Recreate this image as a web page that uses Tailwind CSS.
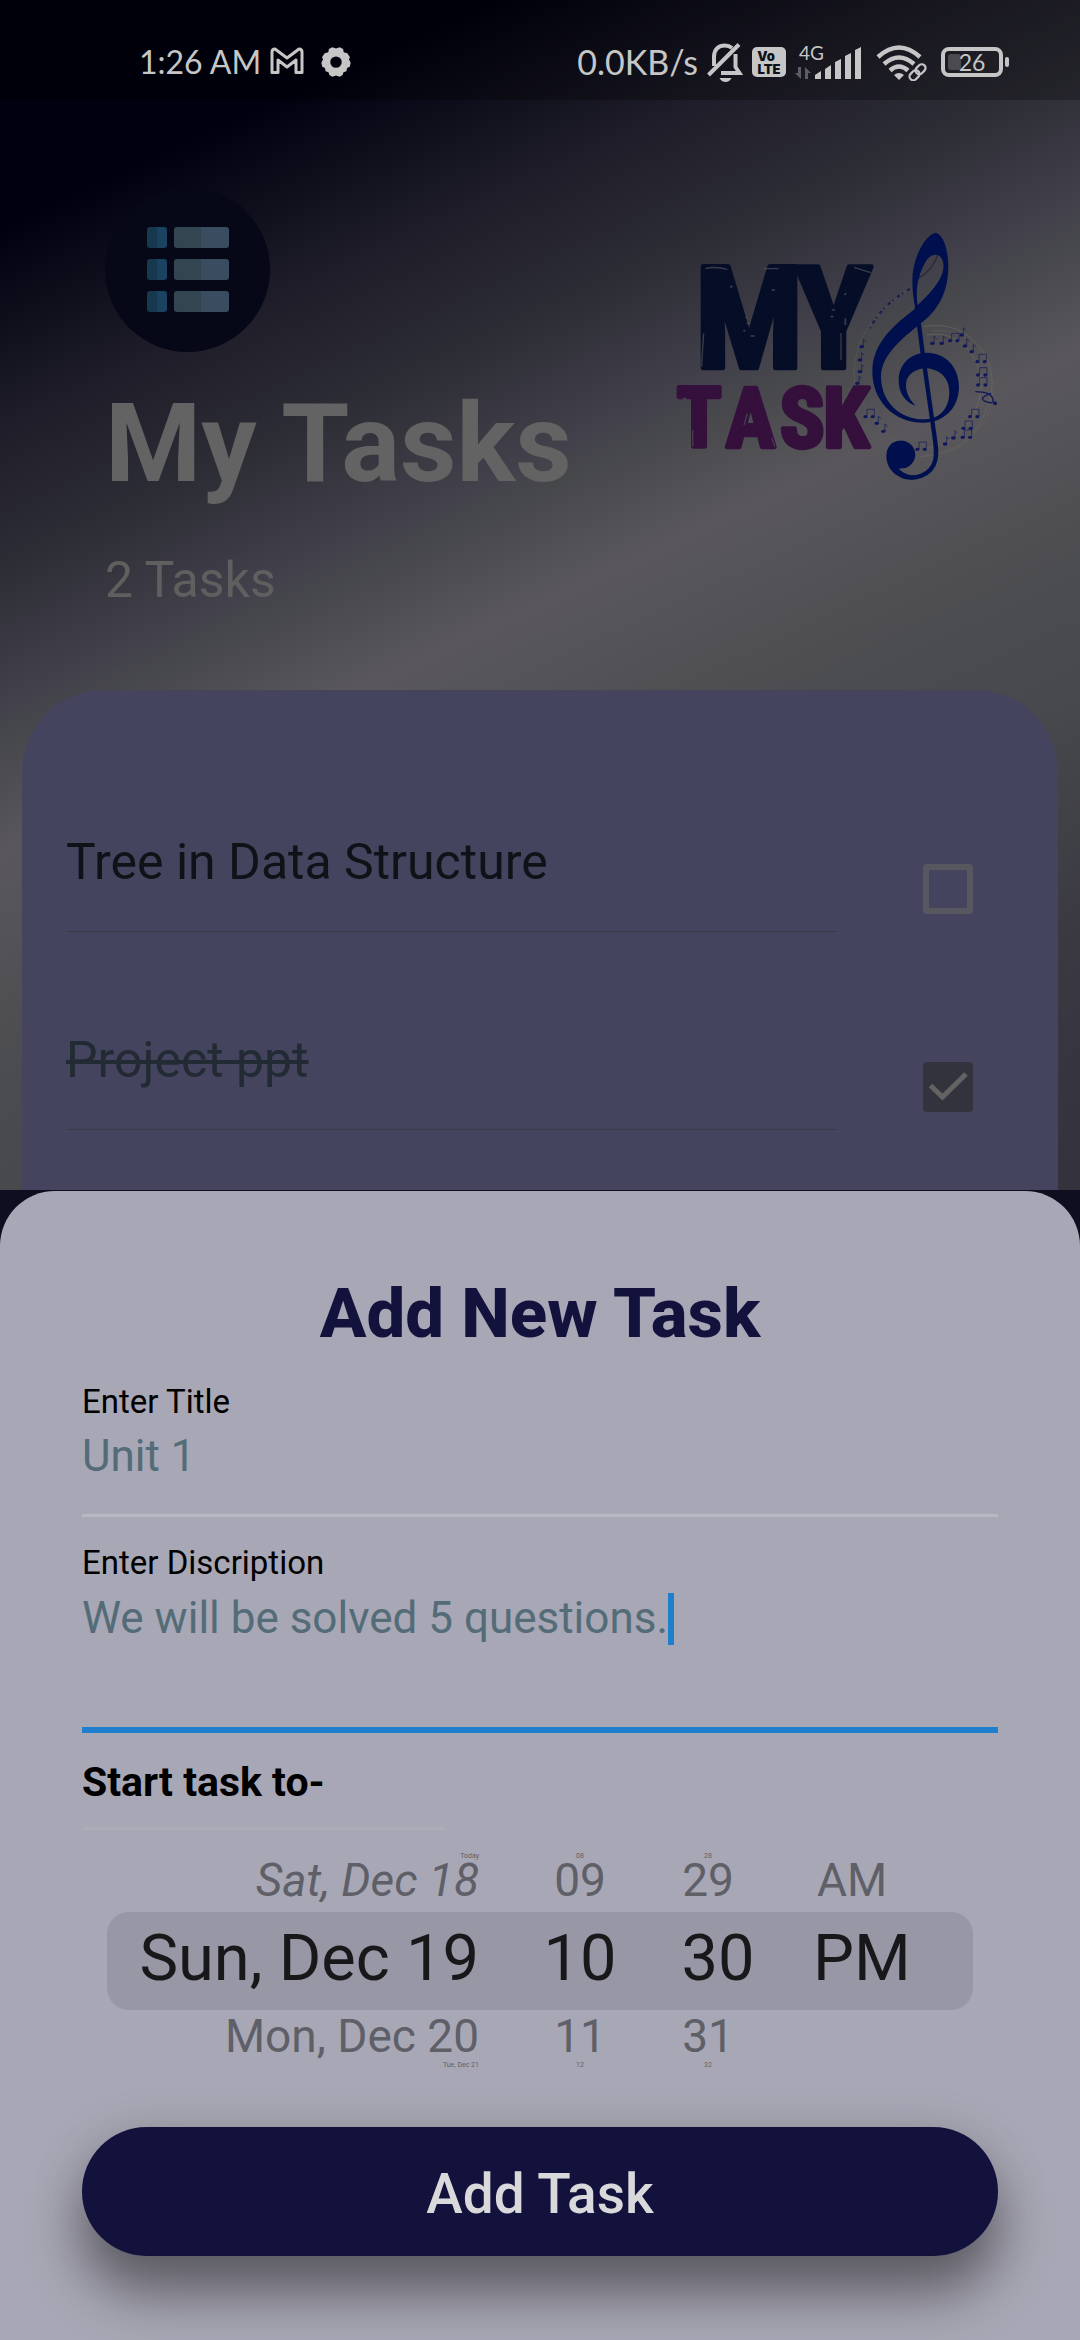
<!DOCTYPE html>
<html lang="en">
<head>
<meta charset="utf-8">
<meta name="viewport" content="width=device-width, initial-scale=1">
<title>My Tasks</title>
<script src="https://cdn.jsdelivr.net/npm/@tailwindcss/browser@4"></script>
</head>
<body class="bg-[#0e0e20] font-['Roboto',sans-serif]">
<div class="flex min-h-screen flex-col bg-[linear-gradient(155deg,#00000f_0%,#00000f_8%,#1e1d29_15%,#2d2d36_20%,#43424c_25%,#46474b_26%,#59575c_30%,#4b4c4f_38%,#47494c_42%,#3b3a43_50%,#33323d_59%,#1b1a28_80%)]">

  <!-- Status bar -->
  <div class="flex h-[100px] items-center bg-black/25 pt-6 pr-[71px] pl-[139px] font-['Lato',sans-serif] text-[34px] leading-10 text-[#c6c6c6]">
    <span class="text-[32px]">1:26 AM</span>
    <svg class="ml-[9px] h-[30px] w-[34px]" viewBox="0 0 34 30" fill="none" stroke="currentColor" stroke-width="3" stroke-linejoin="round" aria-label="Gmail"><path d="M2 25.500V5q0-3 3-3L17 11 29 2q3 0 3 3v20.500h-6V13l-9 7-9-7v12.500z"/></svg>
    <svg class="ml-[16px] h-[32px] w-[32px]" viewBox="0 0 24 24" fill="currentColor" aria-label="Settings"><path fill-rule="evenodd" d="M9.200 1 12 1.800 14.800 1 17.300 2.300 17.800 4.700 20.500 5.500 22.500 8.500 21.700 10 23 12.500 22.300 15.500 20.300 16.500 19.800 19 17.600 19.600 17 21.700 14.800 23 12 22.200 9.200 23 7 21.700 6.400 19.600 4.200 19 3.700 16.500 1.700 15.500 1 12.500 2.300 10 1.500 8.500 3.500 5.500 6.200 4.700 6.700 2.300zM12 7.800a4.300 4.300 0 1 0 0 8.600 4.300 4.300 0 0 0 0-8.600z"/></svg>
    <span class="ml-auto">0.0KB/s</span>
    <svg class="ml-[9px] h-[40px] w-[36px]" viewBox="0 0 36 40" fill="none" stroke="currentColor" stroke-width="4" aria-label="Muted"><path d="M7 24V15C7 7 12 3.500 18 3.500q4 0 7 2.500M14 31h18.500l-4-6V12M1.500 33 32 2.500"/><path d="M12.500 36h12q-2 4-6 4t-6-4z" fill="currentColor" stroke="none"/></svg>
    <svg class="ml-[9px] h-[30px] w-[34px]" viewBox="0 0 34 30" aria-label="VoLTE"><rect width="34" height="30" rx="5" fill="currentColor"/><g fill="#101018" font-family="Inter" font-weight="900" text-anchor="middle"><text x="14" y="14" font-size="13">Vo</text><text x="17" y="27" font-size="13">LTE</text></g></svg>
    <svg class="ml-[9px] h-[46px] w-[68px]" viewBox="0 -6 68 46" fill="currentColor" aria-label="4G signal"><text x="4" y="15" font-size="19" font-family="Lato">4G</text><g fill="#5c5c64"><path d="M3 22h3v12L0 28h3zM10 22v12h3V28h3l-6-6z"/></g><path d="M20 30l6-4v8h-6zM30 24l6-4v14h-6zM40 17l6-3v20h-6zM50 11l6-3v26h-6zM60 5l6-3v32h-6z"/></svg>
    <svg class="ml-[13px] h-[37px] w-[51px]" viewBox="0 0 51 37" fill="none" stroke="currentColor" stroke-width="4.500" aria-label="Wi-Fi"><path d="M2 13Q23-6 44 13M8 20Q23 7 38 20M14 26.500Q23 18.500 32 26.500"/><path d="M18 31q5-4 10 0l-5 5z" fill="currentColor" stroke="none"/><g stroke-width="2.200"><rect x="33" y="27.500" width="11" height="7.500" rx="3.700" transform="rotate(-45 38.500 31.200)"/><rect x="39" y="21.500" width="11" height="7.500" rx="3.700" transform="rotate(-45 44.500 25.200)"/></g></svg>
    <svg class="ml-[14px] h-[30px] w-[68px]" viewBox="0 0 68 30" aria-label="Battery 26%"><rect x="2" y="2" width="58" height="26" rx="6" fill="none" stroke="currentColor" stroke-width="4"/><rect x="7" y="7" width="13" height="16" rx="3" fill="#4a4a4f"/><rect x="64" y="10" width="4" height="10" rx="2" fill="currentColor"/><text x="31" y="24" font-size="23" font-family="Lato" text-anchor="middle" fill="currentColor">26</text></svg>
  </div>

  <!-- Title and logo -->
  <header class="flex pr-[60px] pb-[81px] pl-[105px]">
    <div class="flex-1 pt-[87px]">
      <div class="grid size-[165px] place-items-center rounded-full bg-[#060717]">
        <svg class="h-[86px] w-[82px]" viewBox="0 0 82 86" aria-hidden="true">
          <defs>
            <linearGradient id="key"><stop offset=".5" stop-color="#173950"/><stop offset=".5" stop-color="#1b4260"/></linearGradient>
            <linearGradient id="bar"><stop offset=".5" stop-color="#334551"/><stop offset=".5" stop-color="#3a4d60"/></linearGradient>
          </defs>
          <g fill="url(#key)"><rect width="20" height="21" rx="3"/><rect y="32" width="20" height="21" rx="3"/><rect y="64" width="20" height="21" rx="3"/></g>
          <g fill="url(#bar)"><rect x="27" width="55" height="21" rx="3"/><rect x="27" y="32" width="55" height="21" rx="3"/><rect x="27" y="64" width="55" height="21" rx="3"/></g>
        </svg>
      </div>
      <h1 class="mt-[27px] text-[110px] leading-[129px] font-bold whitespace-nowrap text-[#636363]">My Tasks</h1>
      <p class="mt-[43px] text-[50px] leading-[58px] text-[#5f5f5f]">2 Tasks</p>
    </div>
    <svg class="mt-[110px] h-[290px] w-[360px] shrink-0" viewBox="0 0 1080 870" role="img" aria-label="My Task logo">
      <defs>
        <g id="note"><ellipse cx="0" cy="0" rx="7" ry="5"/><path d="M5 0V-22L13-14" fill="none" stroke="#10185a" stroke-width="2"/></g>
        <g id="pair"><ellipse cx="0" cy="0" rx="6" ry="5"/><ellipse cx="22" cy="0" rx="6" ry="5"/><path d="M5 0V-22H27V0" fill="none" stroke="#10185a" stroke-width="2"/></g>
      </defs>
      <g fill="none" stroke="#6b675f" stroke-width="2">
        <path d="M790 350Q900 330 965 420T960 640Q910 730 780 740"/>
        <path d="M800 375Q890 360 940 440T935 625Q890 700 800 715"/>
        <path d="M810 362Q960 350 1000 520Q1000 680 840 740" opacity=".5"/>
        <path d="M755 232Q610 330 590 430T600 540Q620 640 720 700" opacity=".5"/>
      </g>
      <path d="M835 130Q820 180 775 205" fill="none" stroke="#2a2a38" stroke-width="4"/>
      <path d="M750 236Q660 290 630 355" fill="none" stroke="#1b2050" stroke-width="7" stroke-dasharray="10 14 4 8"/>
      <g fill="#10185a">
        <use href="#note" x="605" y="410"/><use href="#note" x="600" y="450"/><use href="#note" x="600" y="485"/><use href="#note" x="592" y="520"/>
        <use href="#pair" x="616" y="620"/><use href="#note" x="650" y="640"/><use href="#note" x="670" y="664"/>
        <use href="#note" x="817" y="400"/><use href="#note" x="845" y="400"/><use href="#pair" x="870" y="392"/><use href="#note" x="905" y="375"/>
        <use href="#note" x="915" y="408"/><use href="#note" x="935" y="425"/><use href="#pair" x="952" y="455"/><use href="#pair" x="954" y="495"/><use href="#pair" x="954" y="525"/>
        <use href="#pair" x="772" y="718"/><use href="#note" x="855" y="702"/><use href="#note" x="880" y="684"/><use href="#pair" x="908" y="682"/><use href="#pair" x="910" y="655"/><use href="#pair" x="930" y="620"/>
        <circle cx="1005" cy="580" r="6"/><path d="M946 545q45 0 52 20t-20 10 15-25" fill="none" stroke="#10185a" stroke-width="4"/>
      </g>
      <g font-family="'Liberation Sans Narrow','Arial Narrow','Roboto Condensed',sans-serif" font-weight="700" stroke-linejoin="round">
        <g font-size="430" fill="#060e27" stroke="#060e27" stroke-width="14"><text x="104" y="474">M</text><text x="404" y="474">Y</text></g>
        <g font-size="248" fill="#35103c" stroke="#35103c" stroke-width="13"><text x="50" y="711">T</text><text x="198" y="711">A</text><text x="360" y="711">S</text><text x="490" y="711">K</text></g>
      </g>
      <g fill="none" stroke="#50505a" stroke-width="4" opacity=".7">
        <path d="M136 176q30-8 66 2M310 176h46M582 172l50 16M131 370q-4 50-6 100M543 370v80M98 660v50M262 610l-10 35M335 684l10 26"/>
        <path d="M260 340h8M250 362h6M272 378h12M256 322h5M335 240h10M210 230h8M515 300h10M512 320h8M556 325v20M553 255l6-6M333 410h4M480 605v14M68 566h12" stroke-width="5"/>
      </g>
      <path fill="#00104f" fill-rule="evenodd" d="M825 68C790 80 757 150 757 210C757 240 760 265 766 296C700 345 637 400 637 485C637 570 700 638 790 638C850 638 897 595 897 530C897 470 855 428 800 428C750 428 716 465 716 510C716 550 735 577 767 587C745 565 738 545 738 525C738 495 765 475 800 475C840 478 868 505 868 545C868 600 835 628 790 628C720 628 663 575 663 500C663 430 740 375 795 330C840 290 865 240 865 170C865 110 845 68 825 68zM773 285C765 240 775 190 800 150C820 125 845 130 850 160C855 205 810 250 773 285z"/>
      <path d="M770 290 788 430 818 640C826 700 832 720 826 750C814 800 760 810 725 797" fill="none" stroke="#00104f" stroke-width="13"/>
      <path fill="#00104f" d="M720 692A42 42 0 0 1 736 774L716 776Q735 796 770 798L765 808C715 812 679 780 679 738C679 712 695 692 720 692z"/>
    </svg>
  </header>

  <!-- Task list -->
  <ul class="mx-[22px] flex-1 rounded-t-[82px] bg-[#44445f] px-[44px] pt-[44px] text-[50px] leading-[58px]">
    <li class="flex items-end pr-[41px]">
      <label for="task1" class="flex-1 border-b border-[#3b3b46] pt-[99px] pb-[40px] text-[#0e1318]">Tree in Data Structure</label>
      <input id="task1" type="checkbox" class="mb-[18px] ml-[85px] size-[50px] appearance-none rounded-[4px] border-6 border-[#57575f]">
    </li>
    <li class="flex items-end pr-[41px]">
      <label for="task2" class="flex-1 border-b border-[#3b3b46] pt-[99px] pb-[40px] text-[#222b33]"><s class="decoration-4">Project ppt</s></label>
      <span class="mb-[18px] ml-[85px] grid size-[50px]">
        <input id="task2" type="checkbox" checked class="col-start-1 row-start-1 appearance-none rounded-[4px] bg-[#33333d]">
        <svg class="pointer-events-none col-start-1 row-start-1 size-[50px]" viewBox="0 0 50 50" fill="none" stroke="#636363" stroke-width="5"><path d="M7.500 23.500 19.500 35 43 12"/></svg>
      </span>
    </li>
  </ul>

  <!-- Add task sheet -->
  <div class="bg-[#0e0e20] pt-px">
    <form class="flex flex-col rounded-t-[55px] bg-[#a8a7b5] px-[82px] pt-[82px] pb-[84px]">
      <h2 class="text-center text-[69px] leading-[81px] font-extrabold text-[#12123d]">Add New Task</h2>

      <label for="title" class="mt-[28px] text-[33px] leading-[39px] text-black">Enter Title</label>
      <input id="title" type="text" value="Unit 1" class="mt-[9px] h-[87px] w-full border-b-3 border-[#b8b7c2] pb-[32px] text-[44px] leading-[52px] text-[#536c78] outline-none">

      <label for="desc" class="mt-[26px] text-[33px] leading-[39px] text-black">Enter Discription</label>
      <div class="relative mt-[10px] flex">
        <textarea id="desc" class="h-[141px] w-full resize-none border-b-6 border-[#1e80cc] text-[44px] leading-[52px] text-[#536c78] outline-none">We will be solved 5 questions.</textarea>
        <span class="absolute top-px left-[586px] h-[52px] w-[6px] bg-[#1e80cc]"></span>
      </div>

      <h3 class="mt-[26px] text-[41px] leading-[46px] font-bold text-black">Start task to-</h3>
      <div class="mt-[22px] h-[3px] w-[364px] bg-[#acabb8]"></div>

      <!-- Date and time wheel -->
      <div class="mx-[25px] mt-[24px] text-[46px] whitespace-nowrap text-[#5f5f68]" role="group" aria-label="Start date and time">
        <div class="grid h-[5px] grid-cols-[392fr_162fr_104fr_184fr_24fr] text-center text-[7px] leading-[5px]">
          <span class="pr-5 text-right">Today</span><span>08</span><span class="pr-[10px]">28</span>
        </div>
        <div class="grid h-[53px] grid-cols-[392fr_162fr_104fr_184fr_24fr] text-center leading-[42px]">
          <span class="pr-5 text-right italic">Sat, Dec 18</span><span>09</span><span class="pr-[10px]">29</span><span class="pr-[10px]">AM</span>
        </div>
        <div class="grid h-[98px] grid-cols-[392fr_162fr_104fr_184fr_24fr] rounded-[22px] bg-[#9897a5] text-center text-[65px] leading-[92px] text-[#18181a]">
          <span class="pr-5 text-right">Sun, Dec 19</span><span>10</span><span class="pl-[10px]">30</span><span class="pl-[10px]">PM</span>
        </div>
        <div class="grid h-[53px] grid-cols-[392fr_162fr_104fr_184fr_24fr] text-center leading-[53px]">
          <span class="pr-5 text-right">Mon, Dec 20</span><span>11</span><span class="pr-[10px]">31</span>
        </div>
        <div class="grid h-[5px] grid-cols-[392fr_162fr_104fr_184fr_24fr] text-center text-[7px] leading-[5px]">
          <span class="pr-5 text-right">Tue, Dec 21</span><span>12</span><span class="pr-[10px]">32</span>
        </div>
      </div>

      <button type="button" class="mt-[59px] h-[129px] rounded-full bg-[#12123d] pt-[5px] text-[55px] leading-[64px] font-medium text-[#d9d9dc] shadow-[0_38px_55px_rgba(0,0,0,0.40),0_10px_55px_rgba(0,0,0,0.14)]">Add Task</button>
    </form>
  </div>
</div>
</body>
</html>
